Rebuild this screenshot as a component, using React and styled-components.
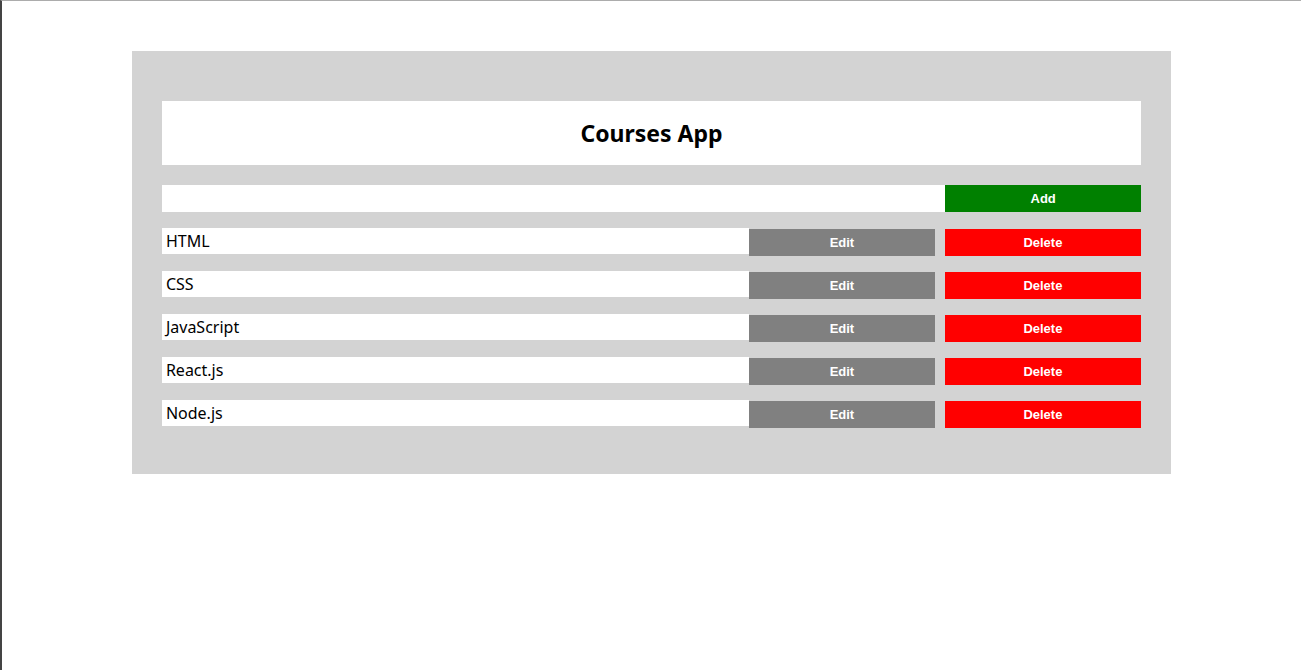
import React, { useState } from "react";
import styled, { createGlobalStyle } from "styled-components";

const Global = createGlobalStyle`
  html, body { margin: 0; padding: 0; background: #fff; }
  * { box-sizing: border-box; }
`;

const Page = styled.div`
  min-height: 100vh;
  border-top: 1px solid #acacac;
  border-left: 2px solid #444;
  padding-top: 50px;
  font-family: "Noto Sans", "Open Sans", sans-serif;
`;

const Panel = styled.div`
  width: 80%;
  margin: 0 auto;
  background: #d3d3d3;
  padding: 50px 30px 46px;
`;

const Header = styled.div`
  background: #fff;
  height: 64px;
  display: flex;
  align-items: center;
  justify-content: center;
`;

const Title = styled.h1`
  margin: 0;
  font-size: 23px;
  font-weight: 700;
  color: #000;
`;

const InputRow = styled.div`
  display: flex;
  margin-top: 20px;
  height: 27px;
`;

const Input = styled.input`
  flex: 0 0 80%;
  border: none;
  outline: none;
  background: #fff;
  height: 27px;
  padding: 0 4px;
  font: inherit;
`;

const Button = styled.button`
  border: none;
  height: 27px;
  padding: 0;
  color: #fff;
  font-family: "Liberation Sans", Arial, sans-serif;
  font-weight: 700;
  font-size: 13px;
  background: ${(p) => p.$bg};
  width: ${(p) => p.$w}px;
  margin-left: ${(p) => p.$ml || 0}px;
  margin-top: ${(p) => p.$mt || 0}px;
  cursor: pointer;
`;

const List = styled.div`
  margin-top: 16px;
  display: flex;
  flex-direction: column;
  gap: 15px;
`;

const Row = styled.div`
  display: flex;
  align-items: flex-start;
`;

const Name = styled.span`
  width: 587px;
  height: 26px;
  line-height: 26px;
  background: #fff;
  padding-left: 4px;
  font-size: 16px;
  color: #000;
`;

const courses = ["HTML", "CSS", "JavaScript", "React.js", "Node.js"];

export default function App() {
  const [value, setValue] = useState("");
  return (
    <>
      <Global />
      <Page>
        <Panel>
          <Header>
            <Title>Courses App</Title>
          </Header>
          <InputRow>
            <Input value={value} onChange={(e) => setValue(e.target.value)} />
            <Button $bg="#008000" $w={196}>Add</Button>
          </InputRow>
          <List>
            {courses.map((c) => (
              <Row key={c}>
                <Name>{c}</Name>
                <Button $bg="#808080" $w={186} $mt={1}>Edit</Button>
                <Button $bg="#ff0000" $w={196} $ml={10} $mt={1}>Delete</Button>
              </Row>
            ))}
          </List>
        </Panel>
      </Page>
    </>
  );
}
